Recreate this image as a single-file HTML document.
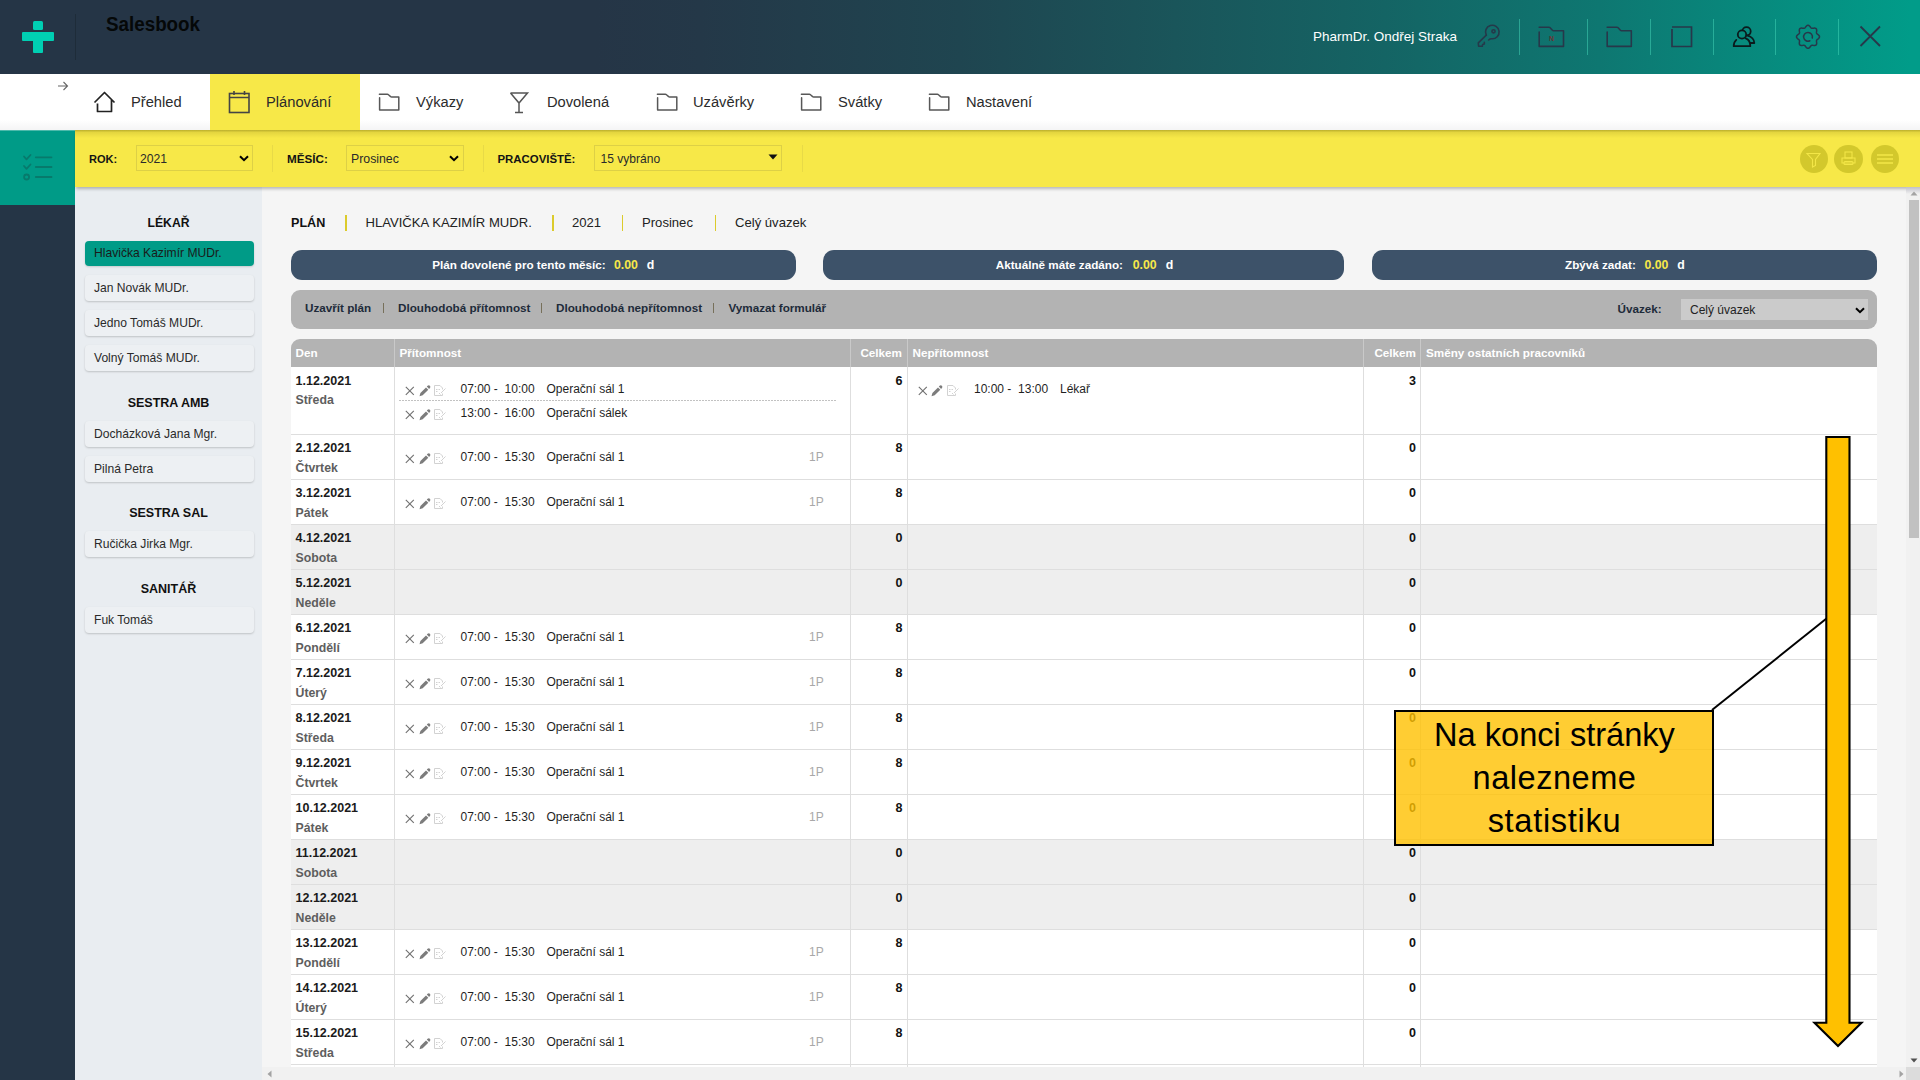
<!DOCTYPE html><html><head><meta charset="utf-8"><style>
html,body{margin:0;padding:0}
body{width:1920px;height:1080px;overflow:hidden;position:relative;font-family:"Liberation Sans", sans-serif;background:#f5f5f5}
.t{position:absolute;line-height:0;white-space:nowrap}
.r{position:absolute;box-sizing:border-box}
svg{position:absolute;overflow:visible}
</style></head><body>
<div class="r" style="left:0px;top:0px;width:1920px;height:74px;background:linear-gradient(90deg,rgb(37,53,70) 0%,rgb(37,53,70) 31%,rgb(36,56,72) 36.5%,rgb(31,69,80) 50%,rgb(26,85,90) 61.2%,rgb(20,100,100) 72.1%,rgb(14,119,113) 83.3%,rgb(1,156,137) 99.5%)"></div>
<div class="r" style="left:33px;top:20.5px;width:9.5px;height:9.7px;background:#00cfb3;border-radius:1.5px"></div>
<div class="r" style="left:22px;top:32px;width:32px;height:9.4px;background:#00cfb3;border-radius:1px"></div>
<div class="r" style="left:33px;top:40px;width:9.5px;height:13px;background:#00cfb3;border-radius:1px"></div>
<div class="r" style="left:75px;top:14px;width:1px;height:46px;background:#1e2c39"></div>
<div class="t" style="left:105.5px;top:24.07px;font-size:20px;font-weight:700;color:#050808;transform:scaleX(0.94);transform-origin:0 0">Salesbook</div>
<div class="t" style="left:1313px;top:37.02px;font-size:13.5px;font-weight:400;color:#ffffff;">PharmDr. Ondřej Straka</div>
<div class="r" style="left:1519px;top:19px;width:1px;height:36px;background:rgba(70,215,185,0.5)"></div>
<div class="r" style="left:1587px;top:19px;width:1px;height:36px;background:rgba(70,215,185,0.5)"></div>
<div class="r" style="left:1650px;top:19px;width:1px;height:36px;background:rgba(70,215,185,0.5)"></div>
<div class="r" style="left:1713px;top:19px;width:1px;height:36px;background:rgba(70,215,185,0.5)"></div>
<div class="r" style="left:1775px;top:19px;width:1px;height:36px;background:rgba(70,215,185,0.5)"></div>
<div class="r" style="left:1838px;top:19px;width:1px;height:36px;background:rgba(70,215,185,0.5)"></div>
<svg style="left:1470px;top:18px" width="40" height="36" viewBox="0 0 40 36"><g fill="none" stroke="#25394a" stroke-width="1.6" stroke-linejoin="round" stroke-linecap="round"><path d="M16.3 17.2 A6.8 6.8 0 1 1 21.8 20.8 C20.5 20.6 19.5 21.2 18.7 22"/><path d="M16.3 17.2 L8.3 24.8 L8.6 28.3 L12.3 28.3 L12.6 26.6 L14.3 26.1 L14.3 24.2"/><circle cx="23.5" cy="13.3" r="1.6"/></g></svg>
<svg style="left:1538px;top:26px" width="28" height="22" viewBox="0 0 28 22"><g fill="none" stroke="#27384a" stroke-width="1.6" stroke-linecap="round" stroke-linejoin="round"><path d="M1.2 1.3 H11 Q11.6 1.3 12.1 1.8 L14.4 4.2 Q14.9 4.7 15.5 4.7 H25.5 V20.4 H1.2 V6.1"/></g><text x="11" y="14.8" font-family="Liberation Sans" font-weight="700" font-size="7" fill="#6a3333">N</text></svg>
<svg style="left:1606px;top:26px" width="28" height="22" viewBox="0 0 28 22"><g fill="none" stroke="#27384a" stroke-width="1.6" stroke-linecap="round" stroke-linejoin="round"><path d="M1.2 1.3 H11 Q11.6 1.3 12.1 1.8 L14.4 4.2 Q14.9 4.7 15.5 4.7 H25.3 V20.4 H1.2 V6.1"/></g></svg>
<svg style="left:1671px;top:26px" width="24" height="23" viewBox="0 0 24 23"><g fill="none" stroke="#27384a" stroke-width="1.7"><path d="M1 1 H20.5 V20.5 H1 V3"/></g></svg>
<svg style="left:1726px;top:18px" width="40" height="36" viewBox="0 0 40 36"><g stroke="#0b1b1d" stroke-width="1.8" stroke-linejoin="round" stroke-linecap="round"><path d="M21.8 17.6 C25.3 18.6 28.3 21.5 28.3 25 L24.2 25" fill="none"/><circle cx="20.5" cy="13.3" r="4.2" fill="none"/><path d="M10.3 21.9 C8.6 23.4 7.7 25.6 7.7 28.2 L24.3 28.2 C24.3 24.2 22.5 21.4 19.8 20.4" fill="#078b7d"/><circle cx="16" cy="16.5" r="4.2" fill="#078b7d"/></g></svg>
<svg style="left:1795px;top:24px" width="26" height="26" viewBox="0 0 26 26"><g fill="none" stroke="#27384a" stroke-width="1.5" stroke-linejoin="round" stroke-linecap="round"><path d="M24.50 12.80 L24.44 13.25 L24.26 13.69 L23.97 14.10 L23.61 14.48 L23.20 14.83 L22.78 15.15 L22.39 15.45 L22.04 15.74 L21.78 16.04 L21.59 16.36 L21.49 16.72 L21.47 17.12 L21.51 17.57 L21.58 18.06 L21.65 18.58 L21.69 19.11 L21.68 19.64 L21.58 20.13 L21.41 20.57 L21.13 20.93 L20.77 21.21 L20.33 21.38 L19.84 21.48 L19.31 21.49 L18.78 21.45 L18.26 21.38 L17.77 21.31 L17.32 21.27 L16.92 21.29 L16.56 21.39 L16.24 21.58 L15.94 21.84 L15.65 22.19 L15.35 22.58 L15.03 23.00 L14.68 23.41 L14.30 23.77 L13.89 24.06 L13.45 24.24 L13.00 24.30 L12.55 24.24 L12.11 24.06 L11.70 23.77 L11.32 23.41 L10.97 23.00 L10.65 22.58 L10.35 22.19 L10.06 21.84 L9.76 21.58 L9.44 21.39 L9.08 21.29 L8.68 21.27 L8.23 21.31 L7.74 21.38 L7.22 21.45 L6.69 21.49 L6.16 21.48 L5.67 21.38 L5.23 21.21 L4.87 20.93 L4.59 20.57 L4.42 20.13 L4.32 19.64 L4.31 19.11 L4.35 18.58 L4.42 18.06 L4.49 17.57 L4.53 17.12 L4.51 16.72 L4.41 16.36 L4.22 16.04 L3.96 15.74 L3.61 15.45 L3.22 15.15 L2.80 14.83 L2.39 14.48 L2.03 14.10 L1.74 13.69 L1.56 13.25 L1.50 12.80 L1.56 12.35 L1.74 11.91 L2.03 11.50 L2.39 11.12 L2.80 10.77 L3.22 10.45 L3.61 10.15 L3.96 9.86 L4.22 9.56 L4.41 9.24 L4.51 8.88 L4.53 8.48 L4.49 8.03 L4.42 7.54 L4.35 7.02 L4.31 6.49 L4.32 5.96 L4.42 5.47 L4.59 5.03 L4.87 4.67 L5.23 4.39 L5.67 4.22 L6.16 4.12 L6.69 4.11 L7.22 4.15 L7.74 4.22 L8.23 4.29 L8.68 4.33 L9.08 4.31 L9.44 4.21 L9.76 4.02 L10.06 3.76 L10.35 3.41 L10.65 3.02 L10.97 2.60 L11.32 2.19 L11.70 1.83 L12.11 1.54 L12.55 1.36 L13.00 1.30 L13.45 1.36 L13.89 1.54 L14.30 1.83 L14.68 2.19 L15.03 2.60 L15.35 3.02 L15.65 3.41 L15.94 3.76 L16.24 4.02 L16.56 4.21 L16.92 4.31 L17.32 4.33 L17.77 4.29 L18.26 4.22 L18.78 4.15 L19.31 4.11 L19.84 4.12 L20.33 4.22 L20.77 4.39 L21.13 4.67 L21.41 5.03 L21.58 5.47 L21.68 5.96 L21.69 6.49 L21.65 7.02 L21.58 7.54 L21.51 8.03 L21.47 8.48 L21.49 8.88 L21.59 9.24 L21.78 9.56 L22.04 9.86 L22.39 10.15 L22.78 10.45 L23.20 10.77 L23.61 11.12 L23.97 11.50 L24.26 11.91 L24.44 12.35 Z"/><path d="M17.25 13.94 A4.4 4.4 0 1 0 14.86 16.79"/></g></svg>
<svg style="left:1859px;top:25px" width="23" height="23" viewBox="0 0 23 23"><g stroke="#27384a" stroke-width="1.8"><path d="M1.5 1.5 L21 21 M21 1.5 L1.5 21"/></g></svg>
<div class="r" style="left:0px;top:74px;width:1920px;height:56px;background:#ffffff"></div>
<div class="r" style="left:0px;top:120px;width:1920px;height:10px;background:linear-gradient(rgba(0,0,0,0),rgba(0,0,30,.045))"></div>
<div class="r" style="left:210px;top:74px;width:150px;height:56px;background:#f7e848"></div>
<svg style="left:57px;top:80px" width="12" height="12" viewBox="0 0 12 12"><g fill="none" stroke="#666" stroke-width="1.1"><path d="M1 6 H10.5 M6.5 2 L10.5 6 L6.5 10"/></g></svg>
<svg style="left:93px;top:91px" width="23" height="22" viewBox="0 0 23 22"><g fill="none" stroke="#222" stroke-width="1.7" stroke-linejoin="round"><path d="M1.5 11.5 L11.5 1.5 L21.5 11.5 M18.5 8.5 V20.5 H4.5 V12.5"/></g></svg>
<svg style="left:228px;top:90px" width="23" height="24" viewBox="0 0 23 24"><g fill="none" stroke="#444" stroke-width="1.6"><rect x="1.5" y="3.5" width="19.5" height="19"/><path d="M1.5 7.5 H21 M6 1 V5 M16.5 1 V5"/></g></svg>
<svg style="left:378px;top:93px" width="23" height="19" viewBox="0 0 23 19"><g fill="none" stroke="#575757" stroke-width="1.5" stroke-linecap="round" stroke-linejoin="round"><path d="M1.4 1.3 H9.4 Q10 1.3 10.5 1.8 L12.6 3.6 Q13 4.1 13.6 4.1 H20.8 V16.9 H1.6 V4.8"/></g></svg>
<svg style="left:656px;top:93px" width="23" height="19" viewBox="0 0 23 19"><g fill="none" stroke="#575757" stroke-width="1.5" stroke-linecap="round" stroke-linejoin="round"><path d="M1.4 1.3 H9.4 Q10 1.3 10.5 1.8 L12.6 3.6 Q13 4.1 13.6 4.1 H20.8 V16.9 H1.6 V4.8"/></g></svg>
<svg style="left:800px;top:93px" width="23" height="19" viewBox="0 0 23 19"><g fill="none" stroke="#575757" stroke-width="1.5" stroke-linecap="round" stroke-linejoin="round"><path d="M1.4 1.3 H9.4 Q10 1.3 10.5 1.8 L12.6 3.6 Q13 4.1 13.6 4.1 H20.8 V16.9 H1.6 V4.8"/></g></svg>
<svg style="left:928px;top:93px" width="23" height="19" viewBox="0 0 23 19"><g fill="none" stroke="#575757" stroke-width="1.5" stroke-linecap="round" stroke-linejoin="round"><path d="M1.4 1.3 H9.4 Q10 1.3 10.5 1.8 L12.6 3.6 Q13 4.1 13.6 4.1 H20.8 V16.9 H1.6 V4.8"/></g></svg>
<svg style="left:509px;top:92px" width="20" height="22" viewBox="0 0 20 22"><g fill="none" stroke="#555" stroke-width="1.5"><path d="M1.5 1 H18.5 L10 11 L1.5 1 M10 11 V20.5 M6 20.5 H14"/></g></svg>
<div class="t" style="left:131px;top:102.21px;font-size:14.7px;font-weight:400;color:#2b2b2b;">Přehled</div>
<div class="t" style="left:266px;top:102.21px;font-size:14.7px;font-weight:400;color:#2b2b2b;">Plánování</div>
<div class="t" style="left:416px;top:102.21px;font-size:14.7px;font-weight:400;color:#2b2b2b;">Výkazy</div>
<div class="t" style="left:547px;top:102.21px;font-size:14.7px;font-weight:400;color:#2b2b2b;">Dovolená</div>
<div class="t" style="left:693px;top:102.21px;font-size:14.7px;font-weight:400;color:#2b2b2b;">Uzávěrky</div>
<div class="t" style="left:838px;top:102.21px;font-size:14.7px;font-weight:400;color:#2b2b2b;">Svátky</div>
<div class="t" style="left:966px;top:102.21px;font-size:14.7px;font-weight:400;color:#2b2b2b;">Nastavení</div>
<div class="r" style="left:0px;top:205px;width:75px;height:875px;background:#253546"></div>
<div class="r" style="left:0px;top:130px;width:75px;height:75px;background:#009b87"></div>
<svg style="left:20px;top:150px" width="36" height="34" viewBox="0 0 36 34"><g fill="none" stroke="#077a6c" stroke-width="1.8" stroke-linecap="round" stroke-linejoin="round"><path d="M4 6.5 L6.5 9.3 L10.5 5 M4 16 L6.5 18.8 L10.5 14.5 M15.8 7.3 H31.5 M15.8 17 H31.5 M15.8 27 H31.5"/><circle cx="6.6" cy="27" r="2.5"/></g></svg>
<div class="r" style="left:75px;top:187px;width:187px;height:893px;background:#e9edf1"></div>
<div class="t" style="left:-131.5px;width:600px;text-align:center;top:222.77px;font-size:12.2px;font-weight:700;color:#111;">LÉKAŘ</div>
<div class="t" style="left:-131.5px;width:600px;text-align:center;top:402.67px;font-size:12.5px;font-weight:700;color:#111;">SESTRA AMB</div>
<div class="t" style="left:-131.5px;width:600px;text-align:center;top:512.67px;font-size:12.5px;font-weight:700;color:#111;">SESTRA SAL</div>
<div class="t" style="left:-131.5px;width:600px;text-align:center;top:588.67px;font-size:12.5px;font-weight:700;color:#111;">SANITÁŘ</div>
<div class="r" style="left:85px;top:241px;width:169px;height:25px;background:#009b87;border-radius:4px;box-shadow:0 1px 2px rgba(0,0,0,.15)"></div>
<div class="t" style="left:94px;top:253.11px;font-size:12.1px;font-weight:400;color:#1a1a1a;">Hlavička Kazimír MUDr.</div>
<div class="r" style="left:85px;top:275px;width:169px;height:26px;background:#edf0f3;border-radius:4px;box-shadow:0 1px 2px rgba(0,0,0,.18)"></div>
<div class="t" style="left:94px;top:288.01px;font-size:12.1px;font-weight:400;color:#2a2a2a;">Jan Novák MUDr.</div>
<div class="r" style="left:85px;top:310px;width:169px;height:26px;background:#edf0f3;border-radius:4px;box-shadow:0 1px 2px rgba(0,0,0,.18)"></div>
<div class="t" style="left:94px;top:323.01px;font-size:12.1px;font-weight:400;color:#2a2a2a;">Jedno Tomáš MUDr.</div>
<div class="r" style="left:85px;top:345px;width:169px;height:26px;background:#edf0f3;border-radius:4px;box-shadow:0 1px 2px rgba(0,0,0,.18)"></div>
<div class="t" style="left:94px;top:358.01px;font-size:12.1px;font-weight:400;color:#2a2a2a;">Volný Tomáš MUDr.</div>
<div class="r" style="left:85px;top:421px;width:169px;height:26px;background:#edf0f3;border-radius:4px;box-shadow:0 1px 2px rgba(0,0,0,.18)"></div>
<div class="t" style="left:94px;top:434.01px;font-size:12.1px;font-weight:400;color:#2a2a2a;">Docházková Jana Mgr.</div>
<div class="r" style="left:85px;top:456px;width:169px;height:26px;background:#edf0f3;border-radius:4px;box-shadow:0 1px 2px rgba(0,0,0,.18)"></div>
<div class="t" style="left:94px;top:469.01px;font-size:12.1px;font-weight:400;color:#2a2a2a;">Pilná Petra</div>
<div class="r" style="left:85px;top:531px;width:169px;height:26px;background:#edf0f3;border-radius:4px;box-shadow:0 1px 2px rgba(0,0,0,.18)"></div>
<div class="t" style="left:94px;top:544.01px;font-size:12.1px;font-weight:400;color:#2a2a2a;">Ručička Jirka Mgr.</div>
<div class="r" style="left:85px;top:607px;width:169px;height:26px;background:#edf0f3;border-radius:4px;box-shadow:0 1px 2px rgba(0,0,0,.18)"></div>
<div class="t" style="left:94px;top:620.01px;font-size:12.1px;font-weight:400;color:#2a2a2a;">Fuk Tomáš</div>
<div class="r" style="left:75px;top:130px;width:1845px;height:57px;background:#f7e848;box-shadow:0 3px 3px -1px rgba(0,0,0,.25)"></div>
<div class="r" style="left:75px;top:130px;width:1845px;height:8px;background:linear-gradient(rgba(90,80,0,.38),rgba(90,80,0,.12) 30%,rgba(90,80,0,0))"></div>
<div class="r" style="left:0px;top:130px;width:75px;height:1px;background:rgba(255,255,255,.3)"></div>
<div class="t" style="left:89px;top:158.99px;font-size:11px;font-weight:700;color:#141414;">ROK:</div>
<div class="r" style="left:136px;top:145px;width:117px;height:26px;border:1px solid #ddd046"></div>
<div class="t" style="left:140px;top:158.77px;font-size:12.2px;font-weight:400;color:#2a2a2a;">2021</div>
<div class="r" style="left:272px;top:145px;width:1px;height:27px;background:#e8da47"></div>
<div class="t" style="left:287px;top:158.75px;font-size:11.7px;font-weight:700;color:#141414;">MĚSÍC:</div>
<div class="r" style="left:346px;top:145px;width:118px;height:26px;border:1px solid #ddd046"></div>
<div class="t" style="left:351px;top:158.74px;font-size:12.3px;font-weight:400;color:#2a2a2a;">Prosinec</div>
<div class="r" style="left:483px;top:145px;width:1px;height:27px;background:#e8da47"></div>
<div class="t" style="left:497.5px;top:158.85px;font-size:11.4px;font-weight:700;color:#141414;">PRACOVIŠTĚ:</div>
<div class="r" style="left:594px;top:145px;width:188px;height:26px;border:1px solid #ddd046"></div>
<div class="t" style="left:600.5px;top:158.82px;font-size:12.06px;font-weight:400;color:#2a2a2a;">15 vybráno</div>
<div class="r" style="left:802px;top:145px;width:1px;height:27px;background:#e8da47"></div>
<svg style="left:239px;top:154.5px" width="10" height="7" viewBox="0 0 10 7"><path d="M1 1.2 L5 5.2 L9 1.2" fill="none" stroke="#000" stroke-width="2"/></svg>
<svg style="left:449px;top:154.5px" width="10" height="7" viewBox="0 0 10 7"><path d="M1 1.2 L5 5.2 L9 1.2" fill="none" stroke="#000" stroke-width="2"/></svg>
<svg style="left:768px;top:154px" width="10" height="6" viewBox="0 0 10 6"><path d="M0.5 0.5 H9.5 L5 5.5 Z" fill="#111"/></svg>
<div class="r" style="left:1799.5px;top:144.8px;width:28.4px;height:28.4px;border-radius:50%;background:#d3c82c"></div>
<div class="r" style="left:1834.3px;top:144.8px;width:28.4px;height:28.4px;border-radius:50%;background:#d3c82c"></div>
<div class="r" style="left:1870.6px;top:144.8px;width:28.4px;height:28.4px;border-radius:50%;background:#d3c82c"></div>
<svg style="left:1806px;top:152px" width="16" height="16" viewBox="0 0 16 16"><path d="M1 1.5 H14 L9.5 7.5 V13.5 L6.5 15 V7.5 Z" fill="none" stroke="#f3e647" stroke-width="1.1"/></svg>
<svg style="left:1840px;top:151px" width="17" height="17" viewBox="0 0 17 17"><g fill="none" stroke="#f3e647" stroke-width="1.1"><rect x="5" y="1" width="7" height="6"/><path d="M2 7 H15 V12 H2 Z"/><rect x="4" y="10.5" width="9" height="3" rx="1"/></g></svg>
<svg style="left:1876px;top:153px" width="18" height="12" viewBox="0 0 18 12"><g stroke="#f3e647" stroke-width="1.6"><path d="M1 2 H17 M1 6 H17 M1 10 H17"/></g></svg>
<div class="t" style="left:291px;top:223.33px;font-size:12.6px;font-weight:700;color:#111;">PLÁN</div>
<div class="r" style="left:345px;top:214.5px;width:1.6px;height:16px;background:#dccb2c"></div>
<div class="r" style="left:552px;top:214.5px;width:1.6px;height:16px;background:#dccb2c"></div>
<div class="r" style="left:621.5px;top:214.5px;width:1.6px;height:16px;background:#dccb2c"></div>
<div class="r" style="left:714.5px;top:214.5px;width:1.6px;height:16px;background:#dccb2c"></div>
<div class="t" style="left:365.5px;top:223.16px;font-size:13.1px;font-weight:400;color:#222;">HLAVIČKA KAZIMÍR MUDR.</div>
<div class="t" style="left:572px;top:223.16px;font-size:13.1px;font-weight:400;color:#222;">2021</div>
<div class="t" style="left:642px;top:223.16px;font-size:13.1px;font-weight:400;color:#222;">Prosinec</div>
<div class="t" style="left:735px;top:223.16px;font-size:13.1px;font-weight:400;color:#222;">Celý úvazek</div>
<div class="r" style="left:291px;top:250px;width:505px;height:30px;background:#3d5269;border-radius:11px"></div>
<div class="t" style="left:432.3px;top:265.25px;font-size:11.7px;font-weight:700;color:#ffffff;">Plán dovolené pro tento měsíc:</div>
<div class="t" style="left:614px;top:265.04px;font-size:12.3px;font-weight:700;color:#f7e848;">0.00</div>
<div class="t" style="left:646.7px;top:265.04px;font-size:12.3px;font-weight:700;color:#ffffff;">d</div>
<div class="r" style="left:823px;top:250px;width:521px;height:30px;background:#3d5269;border-radius:11px"></div>
<div class="t" style="left:995.7px;top:265.25px;font-size:11.7px;font-weight:700;color:#ffffff;">Aktuálně máte zadáno:</div>
<div class="t" style="left:1132.7px;top:265.04px;font-size:12.3px;font-weight:700;color:#f7e848;">0.00</div>
<div class="t" style="left:1165.7px;top:265.04px;font-size:12.3px;font-weight:700;color:#ffffff;">d</div>
<div class="r" style="left:1372px;top:250px;width:505px;height:30px;background:#3d5269;border-radius:11px"></div>
<div class="t" style="left:1565px;top:265.25px;font-size:11.7px;font-weight:700;color:#ffffff;">Zbývá zadat:</div>
<div class="t" style="left:1644.4px;top:265.04px;font-size:12.3px;font-weight:700;color:#f7e848;">0.00</div>
<div class="t" style="left:1677.3px;top:265.04px;font-size:12.3px;font-weight:700;color:#ffffff;">d</div>
<div class="r" style="left:291px;top:290px;width:1586px;height:39px;background:#b3b3b3;border-radius:9px"></div>
<div class="t" style="left:305px;top:307.75px;font-size:11.7px;font-weight:700;color:#1e2b3a;">Uzavřít plán</div>
<div class="t" style="left:398px;top:307.75px;font-size:11.7px;font-weight:700;color:#1e2b3a;">Dlouhodobá přítomnost</div>
<div class="t" style="left:556px;top:307.75px;font-size:11.7px;font-weight:700;color:#1e2b3a;">Dlouhodobá nepřítomnost</div>
<div class="t" style="left:728.5px;top:307.75px;font-size:11.7px;font-weight:700;color:#1e2b3a;">Vymazat formulář</div>
<div class="r" style="left:382.5px;top:302.5px;width:1px;height:10px;background:#77705a"></div>
<div class="r" style="left:541px;top:302.5px;width:1px;height:10px;background:#77705a"></div>
<div class="r" style="left:712.5px;top:302.5px;width:1px;height:10px;background:#77705a"></div>
<div class="t" style="left:1617.5px;top:308.95px;font-size:11.7px;font-weight:700;color:#1e2b3a;">Úvazek:</div>
<div class="r" style="left:1681px;top:299px;width:187px;height:21px;background:#cbcbcb"></div>
<div class="t" style="left:1690px;top:309.84px;font-size:12px;font-weight:400;color:#222;">Celý úvazek</div>
<svg style="left:1854.5px;top:307px" width="10" height="7" viewBox="0 0 10 7"><path d="M1 1.2 L5 5.2 L9 1.2" fill="none" stroke="#000" stroke-width="2"/></svg>
<div class="r" style="left:291px;top:339px;width:1586px;height:28px;background:#b3b3b3;border-radius:9px 9px 0 0"></div>
<div class="r" style="left:394px;top:339px;width:1px;height:28px;background:#c9c9c9"></div>
<div class="r" style="left:850px;top:339px;width:1px;height:28px;background:#c9c9c9"></div>
<div class="r" style="left:907px;top:339px;width:1px;height:28px;background:#c9c9c9"></div>
<div class="r" style="left:1363px;top:339px;width:1px;height:28px;background:#c9c9c9"></div>
<div class="r" style="left:1420px;top:339px;width:1px;height:28px;background:#c9c9c9"></div>
<div class="t" style="left:295.5px;top:352.95px;font-size:11.7px;font-weight:700;color:#ffffff;">Den</div>
<div class="t" style="left:399.5px;top:352.95px;font-size:11.7px;font-weight:700;color:#ffffff;">Přítomnost</div>
<div class="t" style="right:1018px;top:352.95px;font-size:11.7px;font-weight:700;color:#ffffff;text-align:right;">Celkem</div>
<div class="t" style="left:912.5px;top:352.95px;font-size:11.7px;font-weight:700;color:#ffffff;">Nepřítomnost</div>
<div class="t" style="right:504px;top:352.95px;font-size:11.7px;font-weight:700;color:#ffffff;text-align:right;">Celkem</div>
<div class="t" style="left:1426px;top:352.95px;font-size:11.7px;font-weight:700;color:#ffffff;">Směny ostatních pracovníků</div>
<div class="r" style="left:291px;top:367px;width:1586px;height:68px;background:#ffffff;border-bottom:1px solid #dedede"></div>
<div class="r" style="left:394px;top:367px;width:1px;height:68px;background:#dedede"></div>
<div class="r" style="left:850px;top:367px;width:1px;height:68px;background:#dedede"></div>
<div class="r" style="left:907px;top:367px;width:1px;height:68px;background:#dedede"></div>
<div class="r" style="left:1363px;top:367px;width:1px;height:68px;background:#dedede"></div>
<div class="r" style="left:1420px;top:367px;width:1px;height:68px;background:#dedede"></div>
<div class="r" style="left:291px;top:435px;width:1586px;height:45px;background:#ffffff;border-bottom:1px solid #dedede"></div>
<div class="r" style="left:394px;top:435px;width:1px;height:45px;background:#dedede"></div>
<div class="r" style="left:850px;top:435px;width:1px;height:45px;background:#dedede"></div>
<div class="r" style="left:907px;top:435px;width:1px;height:45px;background:#dedede"></div>
<div class="r" style="left:1363px;top:435px;width:1px;height:45px;background:#dedede"></div>
<div class="r" style="left:1420px;top:435px;width:1px;height:45px;background:#dedede"></div>
<div class="r" style="left:291px;top:480px;width:1586px;height:45px;background:#ffffff;border-bottom:1px solid #dedede"></div>
<div class="r" style="left:394px;top:480px;width:1px;height:45px;background:#dedede"></div>
<div class="r" style="left:850px;top:480px;width:1px;height:45px;background:#dedede"></div>
<div class="r" style="left:907px;top:480px;width:1px;height:45px;background:#dedede"></div>
<div class="r" style="left:1363px;top:480px;width:1px;height:45px;background:#dedede"></div>
<div class="r" style="left:1420px;top:480px;width:1px;height:45px;background:#dedede"></div>
<div class="r" style="left:291px;top:525px;width:1586px;height:45px;background:#eeeeee;border-bottom:1px solid #dedede"></div>
<div class="r" style="left:394px;top:525px;width:1px;height:45px;background:#dedede"></div>
<div class="r" style="left:850px;top:525px;width:1px;height:45px;background:#dedede"></div>
<div class="r" style="left:907px;top:525px;width:1px;height:45px;background:#dedede"></div>
<div class="r" style="left:1363px;top:525px;width:1px;height:45px;background:#dedede"></div>
<div class="r" style="left:1420px;top:525px;width:1px;height:45px;background:#dedede"></div>
<div class="r" style="left:291px;top:570px;width:1586px;height:45px;background:#eeeeee;border-bottom:1px solid #dedede"></div>
<div class="r" style="left:394px;top:570px;width:1px;height:45px;background:#dedede"></div>
<div class="r" style="left:850px;top:570px;width:1px;height:45px;background:#dedede"></div>
<div class="r" style="left:907px;top:570px;width:1px;height:45px;background:#dedede"></div>
<div class="r" style="left:1363px;top:570px;width:1px;height:45px;background:#dedede"></div>
<div class="r" style="left:1420px;top:570px;width:1px;height:45px;background:#dedede"></div>
<div class="r" style="left:291px;top:615px;width:1586px;height:45px;background:#ffffff;border-bottom:1px solid #dedede"></div>
<div class="r" style="left:394px;top:615px;width:1px;height:45px;background:#dedede"></div>
<div class="r" style="left:850px;top:615px;width:1px;height:45px;background:#dedede"></div>
<div class="r" style="left:907px;top:615px;width:1px;height:45px;background:#dedede"></div>
<div class="r" style="left:1363px;top:615px;width:1px;height:45px;background:#dedede"></div>
<div class="r" style="left:1420px;top:615px;width:1px;height:45px;background:#dedede"></div>
<div class="r" style="left:291px;top:660px;width:1586px;height:45px;background:#ffffff;border-bottom:1px solid #dedede"></div>
<div class="r" style="left:394px;top:660px;width:1px;height:45px;background:#dedede"></div>
<div class="r" style="left:850px;top:660px;width:1px;height:45px;background:#dedede"></div>
<div class="r" style="left:907px;top:660px;width:1px;height:45px;background:#dedede"></div>
<div class="r" style="left:1363px;top:660px;width:1px;height:45px;background:#dedede"></div>
<div class="r" style="left:1420px;top:660px;width:1px;height:45px;background:#dedede"></div>
<div class="r" style="left:291px;top:705px;width:1586px;height:45px;background:#ffffff;border-bottom:1px solid #dedede"></div>
<div class="r" style="left:394px;top:705px;width:1px;height:45px;background:#dedede"></div>
<div class="r" style="left:850px;top:705px;width:1px;height:45px;background:#dedede"></div>
<div class="r" style="left:907px;top:705px;width:1px;height:45px;background:#dedede"></div>
<div class="r" style="left:1363px;top:705px;width:1px;height:45px;background:#dedede"></div>
<div class="r" style="left:1420px;top:705px;width:1px;height:45px;background:#dedede"></div>
<div class="r" style="left:291px;top:750px;width:1586px;height:45px;background:#ffffff;border-bottom:1px solid #dedede"></div>
<div class="r" style="left:394px;top:750px;width:1px;height:45px;background:#dedede"></div>
<div class="r" style="left:850px;top:750px;width:1px;height:45px;background:#dedede"></div>
<div class="r" style="left:907px;top:750px;width:1px;height:45px;background:#dedede"></div>
<div class="r" style="left:1363px;top:750px;width:1px;height:45px;background:#dedede"></div>
<div class="r" style="left:1420px;top:750px;width:1px;height:45px;background:#dedede"></div>
<div class="r" style="left:291px;top:795px;width:1586px;height:45px;background:#ffffff;border-bottom:1px solid #dedede"></div>
<div class="r" style="left:394px;top:795px;width:1px;height:45px;background:#dedede"></div>
<div class="r" style="left:850px;top:795px;width:1px;height:45px;background:#dedede"></div>
<div class="r" style="left:907px;top:795px;width:1px;height:45px;background:#dedede"></div>
<div class="r" style="left:1363px;top:795px;width:1px;height:45px;background:#dedede"></div>
<div class="r" style="left:1420px;top:795px;width:1px;height:45px;background:#dedede"></div>
<div class="r" style="left:291px;top:840px;width:1586px;height:45px;background:#eeeeee;border-bottom:1px solid #dedede"></div>
<div class="r" style="left:394px;top:840px;width:1px;height:45px;background:#dedede"></div>
<div class="r" style="left:850px;top:840px;width:1px;height:45px;background:#dedede"></div>
<div class="r" style="left:907px;top:840px;width:1px;height:45px;background:#dedede"></div>
<div class="r" style="left:1363px;top:840px;width:1px;height:45px;background:#dedede"></div>
<div class="r" style="left:1420px;top:840px;width:1px;height:45px;background:#dedede"></div>
<div class="r" style="left:291px;top:885px;width:1586px;height:45px;background:#eeeeee;border-bottom:1px solid #dedede"></div>
<div class="r" style="left:394px;top:885px;width:1px;height:45px;background:#dedede"></div>
<div class="r" style="left:850px;top:885px;width:1px;height:45px;background:#dedede"></div>
<div class="r" style="left:907px;top:885px;width:1px;height:45px;background:#dedede"></div>
<div class="r" style="left:1363px;top:885px;width:1px;height:45px;background:#dedede"></div>
<div class="r" style="left:1420px;top:885px;width:1px;height:45px;background:#dedede"></div>
<div class="r" style="left:291px;top:930px;width:1586px;height:45px;background:#ffffff;border-bottom:1px solid #dedede"></div>
<div class="r" style="left:394px;top:930px;width:1px;height:45px;background:#dedede"></div>
<div class="r" style="left:850px;top:930px;width:1px;height:45px;background:#dedede"></div>
<div class="r" style="left:907px;top:930px;width:1px;height:45px;background:#dedede"></div>
<div class="r" style="left:1363px;top:930px;width:1px;height:45px;background:#dedede"></div>
<div class="r" style="left:1420px;top:930px;width:1px;height:45px;background:#dedede"></div>
<div class="r" style="left:291px;top:975px;width:1586px;height:45px;background:#ffffff;border-bottom:1px solid #dedede"></div>
<div class="r" style="left:394px;top:975px;width:1px;height:45px;background:#dedede"></div>
<div class="r" style="left:850px;top:975px;width:1px;height:45px;background:#dedede"></div>
<div class="r" style="left:907px;top:975px;width:1px;height:45px;background:#dedede"></div>
<div class="r" style="left:1363px;top:975px;width:1px;height:45px;background:#dedede"></div>
<div class="r" style="left:1420px;top:975px;width:1px;height:45px;background:#dedede"></div>
<div class="r" style="left:291px;top:1020px;width:1586px;height:45px;background:#ffffff;border-bottom:1px solid #dedede"></div>
<div class="r" style="left:394px;top:1020px;width:1px;height:45px;background:#dedede"></div>
<div class="r" style="left:850px;top:1020px;width:1px;height:45px;background:#dedede"></div>
<div class="r" style="left:907px;top:1020px;width:1px;height:45px;background:#dedede"></div>
<div class="r" style="left:1363px;top:1020px;width:1px;height:45px;background:#dedede"></div>
<div class="r" style="left:1420px;top:1020px;width:1px;height:45px;background:#dedede"></div>
<div class="t" style="left:295.5px;top:381.27px;font-size:12.5px;font-weight:700;color:#1b1b1b;">1.12.2021</div>
<div class="t" style="left:295.5px;top:399.54px;font-size:12.3px;font-weight:700;color:#5e5e5e;">Středa</div>
<svg style="left:405.0px;top:385.7px" width="10" height="10" viewBox="0 0 10 10"><path d="M0.8 0.8 L8.8 8.8 M8.8 0.8 L0.8 8.8" stroke="#6f6f6f" stroke-width="1.1"/></svg>
<svg style="left:418.5px;top:384.7px" width="12" height="12" viewBox="0 0 12 12"><path d="M0.5 11.3 L1.4 8 L7 2.4 L9.3 4.7 L3.7 10.3 Z M7.8 1.6 L8.6 0.8 A1.5 1.5 0 0 1 10.9 3.1 L10.1 3.9 Z" fill="#7c7c7c"/></svg>
<svg style="left:434.0px;top:384.7px" width="13" height="12" viewBox="0 0 13 12"><g fill="none" stroke="#d2d2d2" stroke-width="1"><path d="M8.5 4.5 V3 L6 0.5 H0.5 V10.5 H8.5 V8.5"/><path d="M2 4.5 H3.5 M4.5 4.5 H6 M2 6.5 H3.5 M5 8 L6.5 9.5 M7 8 L11.5 3.5"/></g></svg>
<div class="t" style="left:460.5px;top:388.64px;font-size:12px;font-weight:400;color:#1f1f1f;">07:00 -&nbsp; 10:00</div>
<div class="t" style="left:546.5px;top:388.64px;font-size:12px;font-weight:400;color:#1f1f1f;">Operační sál 1</div>
<div class="r" style="left:399px;top:400px;width:437px;height:1px;background:repeating-linear-gradient(90deg,#c2c2c2 0 2px,rgba(0,0,0,0) 2px 3px)"></div>
<svg style="left:405.0px;top:410.2px" width="10" height="10" viewBox="0 0 10 10"><path d="M0.8 0.8 L8.8 8.8 M8.8 0.8 L0.8 8.8" stroke="#6f6f6f" stroke-width="1.1"/></svg>
<svg style="left:418.5px;top:409.2px" width="12" height="12" viewBox="0 0 12 12"><path d="M0.5 11.3 L1.4 8 L7 2.4 L9.3 4.7 L3.7 10.3 Z M7.8 1.6 L8.6 0.8 A1.5 1.5 0 0 1 10.9 3.1 L10.1 3.9 Z" fill="#7c7c7c"/></svg>
<svg style="left:434.0px;top:409.2px" width="13" height="12" viewBox="0 0 13 12"><g fill="none" stroke="#d2d2d2" stroke-width="1"><path d="M8.5 4.5 V3 L6 0.5 H0.5 V10.5 H8.5 V8.5"/><path d="M2 4.5 H3.5 M4.5 4.5 H6 M2 6.5 H3.5 M5 8 L6.5 9.5 M7 8 L11.5 3.5"/></g></svg>
<div class="t" style="left:460.5px;top:412.64px;font-size:12px;font-weight:400;color:#1f1f1f;">13:00 -&nbsp; 16:00</div>
<div class="t" style="left:546.5px;top:412.64px;font-size:12px;font-weight:400;color:#1f1f1f;">Operační sálek</div>
<div class="t" style="right:1017.5px;top:381.17px;font-size:12.5px;font-weight:700;color:#111;text-align:right;">6</div>
<svg style="left:917.5px;top:385.7px" width="10" height="10" viewBox="0 0 10 10"><path d="M0.8 0.8 L8.8 8.8 M8.8 0.8 L0.8 8.8" stroke="#6f6f6f" stroke-width="1.1"/></svg>
<svg style="left:931px;top:384.7px" width="12" height="12" viewBox="0 0 12 12"><path d="M0.5 11.3 L1.4 8 L7 2.4 L9.3 4.7 L3.7 10.3 Z M7.8 1.6 L8.6 0.8 A1.5 1.5 0 0 1 10.9 3.1 L10.1 3.9 Z" fill="#7c7c7c"/></svg>
<svg style="left:946.5px;top:384.7px" width="13" height="12" viewBox="0 0 13 12"><g fill="none" stroke="#d2d2d2" stroke-width="1"><path d="M8.5 4.5 V3 L6 0.5 H0.5 V10.5 H8.5 V8.5"/><path d="M2 4.5 H3.5 M4.5 4.5 H6 M2 6.5 H3.5 M5 8 L6.5 9.5 M7 8 L11.5 3.5"/></g></svg>
<div class="t" style="left:974px;top:389.14px;font-size:12px;font-weight:400;color:#1f1f1f;">10:00 -&nbsp; 13:00</div>
<div class="t" style="left:1060px;top:389.14px;font-size:12px;font-weight:400;color:#1f1f1f;">Lékař</div>
<div class="t" style="right:504px;top:381.17px;font-size:12.5px;font-weight:700;color:#111;text-align:right;">3</div>
<div class="t" style="left:295.5px;top:448.47px;font-size:12.5px;font-weight:700;color:#1b1b1b;">2.12.2021</div>
<div class="t" style="left:295.5px;top:467.54px;font-size:12.3px;font-weight:700;color:#5e5e5e;">Čtvrtek</div>
<svg style="left:405.0px;top:454.0px" width="10" height="10" viewBox="0 0 10 10"><path d="M0.8 0.8 L8.8 8.8 M8.8 0.8 L0.8 8.8" stroke="#6f6f6f" stroke-width="1.1"/></svg>
<svg style="left:418.5px;top:453.0px" width="12" height="12" viewBox="0 0 12 12"><path d="M0.5 11.3 L1.4 8 L7 2.4 L9.3 4.7 L3.7 10.3 Z M7.8 1.6 L8.6 0.8 A1.5 1.5 0 0 1 10.9 3.1 L10.1 3.9 Z" fill="#7c7c7c"/></svg>
<svg style="left:434.0px;top:453.0px" width="13" height="12" viewBox="0 0 13 12"><g fill="none" stroke="#d2d2d2" stroke-width="1"><path d="M8.5 4.5 V3 L6 0.5 H0.5 V10.5 H8.5 V8.5"/><path d="M2 4.5 H3.5 M4.5 4.5 H6 M2 6.5 H3.5 M5 8 L6.5 9.5 M7 8 L11.5 3.5"/></g></svg>
<div class="t" style="left:460.5px;top:456.84px;font-size:12px;font-weight:400;color:#1f1f1f;">07:00 -&nbsp; 15:30</div>
<div class="t" style="left:546.5px;top:456.84px;font-size:12px;font-weight:400;color:#1f1f1f;">Operační sál 1</div>
<div class="t" style="left:809px;top:456.84px;font-size:12px;font-weight:400;color:#a8a8a8;">1P</div>
<div class="t" style="right:1017.5px;top:448.27px;font-size:12.5px;font-weight:700;color:#111;text-align:right;">8</div>
<div class="t" style="right:504px;top:448.27px;font-size:12.5px;font-weight:700;color:#111;text-align:right;">0</div>
<div class="t" style="left:295.5px;top:493.47px;font-size:12.5px;font-weight:700;color:#1b1b1b;">3.12.2021</div>
<div class="t" style="left:295.5px;top:512.54px;font-size:12.3px;font-weight:700;color:#5e5e5e;">Pátek</div>
<svg style="left:405.0px;top:499.0px" width="10" height="10" viewBox="0 0 10 10"><path d="M0.8 0.8 L8.8 8.8 M8.8 0.8 L0.8 8.8" stroke="#6f6f6f" stroke-width="1.1"/></svg>
<svg style="left:418.5px;top:498.0px" width="12" height="12" viewBox="0 0 12 12"><path d="M0.5 11.3 L1.4 8 L7 2.4 L9.3 4.7 L3.7 10.3 Z M7.8 1.6 L8.6 0.8 A1.5 1.5 0 0 1 10.9 3.1 L10.1 3.9 Z" fill="#7c7c7c"/></svg>
<svg style="left:434.0px;top:498.0px" width="13" height="12" viewBox="0 0 13 12"><g fill="none" stroke="#d2d2d2" stroke-width="1"><path d="M8.5 4.5 V3 L6 0.5 H0.5 V10.5 H8.5 V8.5"/><path d="M2 4.5 H3.5 M4.5 4.5 H6 M2 6.5 H3.5 M5 8 L6.5 9.5 M7 8 L11.5 3.5"/></g></svg>
<div class="t" style="left:460.5px;top:501.84px;font-size:12px;font-weight:400;color:#1f1f1f;">07:00 -&nbsp; 15:30</div>
<div class="t" style="left:546.5px;top:501.84px;font-size:12px;font-weight:400;color:#1f1f1f;">Operační sál 1</div>
<div class="t" style="left:809px;top:501.84px;font-size:12px;font-weight:400;color:#a8a8a8;">1P</div>
<div class="t" style="right:1017.5px;top:493.27px;font-size:12.5px;font-weight:700;color:#111;text-align:right;">8</div>
<div class="t" style="right:504px;top:493.27px;font-size:12.5px;font-weight:700;color:#111;text-align:right;">0</div>
<div class="t" style="left:295.5px;top:538.47px;font-size:12.5px;font-weight:700;color:#1b1b1b;">4.12.2021</div>
<div class="t" style="left:295.5px;top:557.54px;font-size:12.3px;font-weight:700;color:#5e5e5e;">Sobota</div>
<div class="t" style="right:1017.5px;top:538.27px;font-size:12.5px;font-weight:700;color:#111;text-align:right;">0</div>
<div class="t" style="right:504px;top:538.27px;font-size:12.5px;font-weight:700;color:#111;text-align:right;">0</div>
<div class="t" style="left:295.5px;top:583.47px;font-size:12.5px;font-weight:700;color:#1b1b1b;">5.12.2021</div>
<div class="t" style="left:295.5px;top:602.54px;font-size:12.3px;font-weight:700;color:#5e5e5e;">Neděle</div>
<div class="t" style="right:1017.5px;top:583.27px;font-size:12.5px;font-weight:700;color:#111;text-align:right;">0</div>
<div class="t" style="right:504px;top:583.27px;font-size:12.5px;font-weight:700;color:#111;text-align:right;">0</div>
<div class="t" style="left:295.5px;top:628.47px;font-size:12.5px;font-weight:700;color:#1b1b1b;">6.12.2021</div>
<div class="t" style="left:295.5px;top:647.54px;font-size:12.3px;font-weight:700;color:#5e5e5e;">Pondělí</div>
<svg style="left:405.0px;top:634.0px" width="10" height="10" viewBox="0 0 10 10"><path d="M0.8 0.8 L8.8 8.8 M8.8 0.8 L0.8 8.8" stroke="#6f6f6f" stroke-width="1.1"/></svg>
<svg style="left:418.5px;top:633.0px" width="12" height="12" viewBox="0 0 12 12"><path d="M0.5 11.3 L1.4 8 L7 2.4 L9.3 4.7 L3.7 10.3 Z M7.8 1.6 L8.6 0.8 A1.5 1.5 0 0 1 10.9 3.1 L10.1 3.9 Z" fill="#7c7c7c"/></svg>
<svg style="left:434.0px;top:633.0px" width="13" height="12" viewBox="0 0 13 12"><g fill="none" stroke="#d2d2d2" stroke-width="1"><path d="M8.5 4.5 V3 L6 0.5 H0.5 V10.5 H8.5 V8.5"/><path d="M2 4.5 H3.5 M4.5 4.5 H6 M2 6.5 H3.5 M5 8 L6.5 9.5 M7 8 L11.5 3.5"/></g></svg>
<div class="t" style="left:460.5px;top:636.84px;font-size:12px;font-weight:400;color:#1f1f1f;">07:00 -&nbsp; 15:30</div>
<div class="t" style="left:546.5px;top:636.84px;font-size:12px;font-weight:400;color:#1f1f1f;">Operační sál 1</div>
<div class="t" style="left:809px;top:636.84px;font-size:12px;font-weight:400;color:#a8a8a8;">1P</div>
<div class="t" style="right:1017.5px;top:628.27px;font-size:12.5px;font-weight:700;color:#111;text-align:right;">8</div>
<div class="t" style="right:504px;top:628.27px;font-size:12.5px;font-weight:700;color:#111;text-align:right;">0</div>
<div class="t" style="left:295.5px;top:673.47px;font-size:12.5px;font-weight:700;color:#1b1b1b;">7.12.2021</div>
<div class="t" style="left:295.5px;top:692.54px;font-size:12.3px;font-weight:700;color:#5e5e5e;">Úterý</div>
<svg style="left:405.0px;top:679.0px" width="10" height="10" viewBox="0 0 10 10"><path d="M0.8 0.8 L8.8 8.8 M8.8 0.8 L0.8 8.8" stroke="#6f6f6f" stroke-width="1.1"/></svg>
<svg style="left:418.5px;top:678.0px" width="12" height="12" viewBox="0 0 12 12"><path d="M0.5 11.3 L1.4 8 L7 2.4 L9.3 4.7 L3.7 10.3 Z M7.8 1.6 L8.6 0.8 A1.5 1.5 0 0 1 10.9 3.1 L10.1 3.9 Z" fill="#7c7c7c"/></svg>
<svg style="left:434.0px;top:678.0px" width="13" height="12" viewBox="0 0 13 12"><g fill="none" stroke="#d2d2d2" stroke-width="1"><path d="M8.5 4.5 V3 L6 0.5 H0.5 V10.5 H8.5 V8.5"/><path d="M2 4.5 H3.5 M4.5 4.5 H6 M2 6.5 H3.5 M5 8 L6.5 9.5 M7 8 L11.5 3.5"/></g></svg>
<div class="t" style="left:460.5px;top:681.84px;font-size:12px;font-weight:400;color:#1f1f1f;">07:00 -&nbsp; 15:30</div>
<div class="t" style="left:546.5px;top:681.84px;font-size:12px;font-weight:400;color:#1f1f1f;">Operační sál 1</div>
<div class="t" style="left:809px;top:681.84px;font-size:12px;font-weight:400;color:#a8a8a8;">1P</div>
<div class="t" style="right:1017.5px;top:673.27px;font-size:12.5px;font-weight:700;color:#111;text-align:right;">8</div>
<div class="t" style="right:504px;top:673.27px;font-size:12.5px;font-weight:700;color:#111;text-align:right;">0</div>
<div class="t" style="left:295.5px;top:718.47px;font-size:12.5px;font-weight:700;color:#1b1b1b;">8.12.2021</div>
<div class="t" style="left:295.5px;top:737.54px;font-size:12.3px;font-weight:700;color:#5e5e5e;">Středa</div>
<svg style="left:405.0px;top:724.0px" width="10" height="10" viewBox="0 0 10 10"><path d="M0.8 0.8 L8.8 8.8 M8.8 0.8 L0.8 8.8" stroke="#6f6f6f" stroke-width="1.1"/></svg>
<svg style="left:418.5px;top:723.0px" width="12" height="12" viewBox="0 0 12 12"><path d="M0.5 11.3 L1.4 8 L7 2.4 L9.3 4.7 L3.7 10.3 Z M7.8 1.6 L8.6 0.8 A1.5 1.5 0 0 1 10.9 3.1 L10.1 3.9 Z" fill="#7c7c7c"/></svg>
<svg style="left:434.0px;top:723.0px" width="13" height="12" viewBox="0 0 13 12"><g fill="none" stroke="#d2d2d2" stroke-width="1"><path d="M8.5 4.5 V3 L6 0.5 H0.5 V10.5 H8.5 V8.5"/><path d="M2 4.5 H3.5 M4.5 4.5 H6 M2 6.5 H3.5 M5 8 L6.5 9.5 M7 8 L11.5 3.5"/></g></svg>
<div class="t" style="left:460.5px;top:726.84px;font-size:12px;font-weight:400;color:#1f1f1f;">07:00 -&nbsp; 15:30</div>
<div class="t" style="left:546.5px;top:726.84px;font-size:12px;font-weight:400;color:#1f1f1f;">Operační sál 1</div>
<div class="t" style="left:809px;top:726.84px;font-size:12px;font-weight:400;color:#a8a8a8;">1P</div>
<div class="t" style="right:1017.5px;top:718.27px;font-size:12.5px;font-weight:700;color:#111;text-align:right;">8</div>
<div class="t" style="right:504px;top:718.27px;font-size:12.5px;font-weight:700;color:#111;text-align:right;">0</div>
<div class="t" style="left:295.5px;top:763.47px;font-size:12.5px;font-weight:700;color:#1b1b1b;">9.12.2021</div>
<div class="t" style="left:295.5px;top:782.54px;font-size:12.3px;font-weight:700;color:#5e5e5e;">Čtvrtek</div>
<svg style="left:405.0px;top:769.0px" width="10" height="10" viewBox="0 0 10 10"><path d="M0.8 0.8 L8.8 8.8 M8.8 0.8 L0.8 8.8" stroke="#6f6f6f" stroke-width="1.1"/></svg>
<svg style="left:418.5px;top:768.0px" width="12" height="12" viewBox="0 0 12 12"><path d="M0.5 11.3 L1.4 8 L7 2.4 L9.3 4.7 L3.7 10.3 Z M7.8 1.6 L8.6 0.8 A1.5 1.5 0 0 1 10.9 3.1 L10.1 3.9 Z" fill="#7c7c7c"/></svg>
<svg style="left:434.0px;top:768.0px" width="13" height="12" viewBox="0 0 13 12"><g fill="none" stroke="#d2d2d2" stroke-width="1"><path d="M8.5 4.5 V3 L6 0.5 H0.5 V10.5 H8.5 V8.5"/><path d="M2 4.5 H3.5 M4.5 4.5 H6 M2 6.5 H3.5 M5 8 L6.5 9.5 M7 8 L11.5 3.5"/></g></svg>
<div class="t" style="left:460.5px;top:771.84px;font-size:12px;font-weight:400;color:#1f1f1f;">07:00 -&nbsp; 15:30</div>
<div class="t" style="left:546.5px;top:771.84px;font-size:12px;font-weight:400;color:#1f1f1f;">Operační sál 1</div>
<div class="t" style="left:809px;top:771.84px;font-size:12px;font-weight:400;color:#a8a8a8;">1P</div>
<div class="t" style="right:1017.5px;top:763.27px;font-size:12.5px;font-weight:700;color:#111;text-align:right;">8</div>
<div class="t" style="right:504px;top:763.27px;font-size:12.5px;font-weight:700;color:#111;text-align:right;">0</div>
<div class="t" style="left:295.5px;top:808.47px;font-size:12.5px;font-weight:700;color:#1b1b1b;">10.12.2021</div>
<div class="t" style="left:295.5px;top:827.54px;font-size:12.3px;font-weight:700;color:#5e5e5e;">Pátek</div>
<svg style="left:405.0px;top:814.0px" width="10" height="10" viewBox="0 0 10 10"><path d="M0.8 0.8 L8.8 8.8 M8.8 0.8 L0.8 8.8" stroke="#6f6f6f" stroke-width="1.1"/></svg>
<svg style="left:418.5px;top:813.0px" width="12" height="12" viewBox="0 0 12 12"><path d="M0.5 11.3 L1.4 8 L7 2.4 L9.3 4.7 L3.7 10.3 Z M7.8 1.6 L8.6 0.8 A1.5 1.5 0 0 1 10.9 3.1 L10.1 3.9 Z" fill="#7c7c7c"/></svg>
<svg style="left:434.0px;top:813.0px" width="13" height="12" viewBox="0 0 13 12"><g fill="none" stroke="#d2d2d2" stroke-width="1"><path d="M8.5 4.5 V3 L6 0.5 H0.5 V10.5 H8.5 V8.5"/><path d="M2 4.5 H3.5 M4.5 4.5 H6 M2 6.5 H3.5 M5 8 L6.5 9.5 M7 8 L11.5 3.5"/></g></svg>
<div class="t" style="left:460.5px;top:816.84px;font-size:12px;font-weight:400;color:#1f1f1f;">07:00 -&nbsp; 15:30</div>
<div class="t" style="left:546.5px;top:816.84px;font-size:12px;font-weight:400;color:#1f1f1f;">Operační sál 1</div>
<div class="t" style="left:809px;top:816.84px;font-size:12px;font-weight:400;color:#a8a8a8;">1P</div>
<div class="t" style="right:1017.5px;top:808.27px;font-size:12.5px;font-weight:700;color:#111;text-align:right;">8</div>
<div class="t" style="right:504px;top:808.27px;font-size:12.5px;font-weight:700;color:#111;text-align:right;">0</div>
<div class="t" style="left:295.5px;top:853.47px;font-size:12.5px;font-weight:700;color:#1b1b1b;">11.12.2021</div>
<div class="t" style="left:295.5px;top:872.54px;font-size:12.3px;font-weight:700;color:#5e5e5e;">Sobota</div>
<div class="t" style="right:1017.5px;top:853.27px;font-size:12.5px;font-weight:700;color:#111;text-align:right;">0</div>
<div class="t" style="right:504px;top:853.27px;font-size:12.5px;font-weight:700;color:#111;text-align:right;">0</div>
<div class="t" style="left:295.5px;top:898.47px;font-size:12.5px;font-weight:700;color:#1b1b1b;">12.12.2021</div>
<div class="t" style="left:295.5px;top:917.54px;font-size:12.3px;font-weight:700;color:#5e5e5e;">Neděle</div>
<div class="t" style="right:1017.5px;top:898.27px;font-size:12.5px;font-weight:700;color:#111;text-align:right;">0</div>
<div class="t" style="right:504px;top:898.27px;font-size:12.5px;font-weight:700;color:#111;text-align:right;">0</div>
<div class="t" style="left:295.5px;top:943.47px;font-size:12.5px;font-weight:700;color:#1b1b1b;">13.12.2021</div>
<div class="t" style="left:295.5px;top:962.54px;font-size:12.3px;font-weight:700;color:#5e5e5e;">Pondělí</div>
<svg style="left:405.0px;top:949.0px" width="10" height="10" viewBox="0 0 10 10"><path d="M0.8 0.8 L8.8 8.8 M8.8 0.8 L0.8 8.8" stroke="#6f6f6f" stroke-width="1.1"/></svg>
<svg style="left:418.5px;top:948.0px" width="12" height="12" viewBox="0 0 12 12"><path d="M0.5 11.3 L1.4 8 L7 2.4 L9.3 4.7 L3.7 10.3 Z M7.8 1.6 L8.6 0.8 A1.5 1.5 0 0 1 10.9 3.1 L10.1 3.9 Z" fill="#7c7c7c"/></svg>
<svg style="left:434.0px;top:948.0px" width="13" height="12" viewBox="0 0 13 12"><g fill="none" stroke="#d2d2d2" stroke-width="1"><path d="M8.5 4.5 V3 L6 0.5 H0.5 V10.5 H8.5 V8.5"/><path d="M2 4.5 H3.5 M4.5 4.5 H6 M2 6.5 H3.5 M5 8 L6.5 9.5 M7 8 L11.5 3.5"/></g></svg>
<div class="t" style="left:460.5px;top:951.84px;font-size:12px;font-weight:400;color:#1f1f1f;">07:00 -&nbsp; 15:30</div>
<div class="t" style="left:546.5px;top:951.84px;font-size:12px;font-weight:400;color:#1f1f1f;">Operační sál 1</div>
<div class="t" style="left:809px;top:951.84px;font-size:12px;font-weight:400;color:#a8a8a8;">1P</div>
<div class="t" style="right:1017.5px;top:943.27px;font-size:12.5px;font-weight:700;color:#111;text-align:right;">8</div>
<div class="t" style="right:504px;top:943.27px;font-size:12.5px;font-weight:700;color:#111;text-align:right;">0</div>
<div class="t" style="left:295.5px;top:988.47px;font-size:12.5px;font-weight:700;color:#1b1b1b;">14.12.2021</div>
<div class="t" style="left:295.5px;top:1007.54px;font-size:12.3px;font-weight:700;color:#5e5e5e;">Úterý</div>
<svg style="left:405.0px;top:994.0px" width="10" height="10" viewBox="0 0 10 10"><path d="M0.8 0.8 L8.8 8.8 M8.8 0.8 L0.8 8.8" stroke="#6f6f6f" stroke-width="1.1"/></svg>
<svg style="left:418.5px;top:993.0px" width="12" height="12" viewBox="0 0 12 12"><path d="M0.5 11.3 L1.4 8 L7 2.4 L9.3 4.7 L3.7 10.3 Z M7.8 1.6 L8.6 0.8 A1.5 1.5 0 0 1 10.9 3.1 L10.1 3.9 Z" fill="#7c7c7c"/></svg>
<svg style="left:434.0px;top:993.0px" width="13" height="12" viewBox="0 0 13 12"><g fill="none" stroke="#d2d2d2" stroke-width="1"><path d="M8.5 4.5 V3 L6 0.5 H0.5 V10.5 H8.5 V8.5"/><path d="M2 4.5 H3.5 M4.5 4.5 H6 M2 6.5 H3.5 M5 8 L6.5 9.5 M7 8 L11.5 3.5"/></g></svg>
<div class="t" style="left:460.5px;top:996.84px;font-size:12px;font-weight:400;color:#1f1f1f;">07:00 -&nbsp; 15:30</div>
<div class="t" style="left:546.5px;top:996.84px;font-size:12px;font-weight:400;color:#1f1f1f;">Operační sál 1</div>
<div class="t" style="left:809px;top:996.84px;font-size:12px;font-weight:400;color:#a8a8a8;">1P</div>
<div class="t" style="right:1017.5px;top:988.27px;font-size:12.5px;font-weight:700;color:#111;text-align:right;">8</div>
<div class="t" style="right:504px;top:988.27px;font-size:12.5px;font-weight:700;color:#111;text-align:right;">0</div>
<div class="t" style="left:295.5px;top:1033.47px;font-size:12.5px;font-weight:700;color:#1b1b1b;">15.12.2021</div>
<div class="t" style="left:295.5px;top:1052.54px;font-size:12.3px;font-weight:700;color:#5e5e5e;">Středa</div>
<svg style="left:405.0px;top:1039.0px" width="10" height="10" viewBox="0 0 10 10"><path d="M0.8 0.8 L8.8 8.8 M8.8 0.8 L0.8 8.8" stroke="#6f6f6f" stroke-width="1.1"/></svg>
<svg style="left:418.5px;top:1038.0px" width="12" height="12" viewBox="0 0 12 12"><path d="M0.5 11.3 L1.4 8 L7 2.4 L9.3 4.7 L3.7 10.3 Z M7.8 1.6 L8.6 0.8 A1.5 1.5 0 0 1 10.9 3.1 L10.1 3.9 Z" fill="#7c7c7c"/></svg>
<svg style="left:434.0px;top:1038.0px" width="13" height="12" viewBox="0 0 13 12"><g fill="none" stroke="#d2d2d2" stroke-width="1"><path d="M8.5 4.5 V3 L6 0.5 H0.5 V10.5 H8.5 V8.5"/><path d="M2 4.5 H3.5 M4.5 4.5 H6 M2 6.5 H3.5 M5 8 L6.5 9.5 M7 8 L11.5 3.5"/></g></svg>
<div class="t" style="left:460.5px;top:1041.84px;font-size:12px;font-weight:400;color:#1f1f1f;">07:00 -&nbsp; 15:30</div>
<div class="t" style="left:546.5px;top:1041.84px;font-size:12px;font-weight:400;color:#1f1f1f;">Operační sál 1</div>
<div class="t" style="left:809px;top:1041.84px;font-size:12px;font-weight:400;color:#a8a8a8;">1P</div>
<div class="t" style="right:1017.5px;top:1033.27px;font-size:12.5px;font-weight:700;color:#111;text-align:right;">8</div>
<div class="t" style="right:504px;top:1033.27px;font-size:12.5px;font-weight:700;color:#111;text-align:right;">0</div>
<div class="r" style="left:291px;top:1065px;width:1586px;height:2px;background:#fff"></div>
<div class="r" style="left:394px;top:1065px;width:1px;height:2px;background:#dedede"></div>
<div class="r" style="left:850px;top:1065px;width:1px;height:2px;background:#dedede"></div>
<div class="r" style="left:907px;top:1065px;width:1px;height:2px;background:#dedede"></div>
<div class="r" style="left:1363px;top:1065px;width:1px;height:2px;background:#dedede"></div>
<div class="r" style="left:1420px;top:1065px;width:1px;height:2px;background:#dedede"></div>
<div class="r" style="left:1906px;top:187px;width:14px;height:893px;background:#f1f1f1"></div>
<div class="r" style="left:1909px;top:200px;width:9.5px;height:338px;background:#c1c1c1"></div>
<div class="r" style="left:1906px;top:187px;width:14px;height:7px;background:linear-gradient(rgba(20,20,60,.22),rgba(0,0,0,0))"></div>
<svg style="left:1910px;top:191px" width="8" height="5" viewBox="0 0 8 5"><path d="M0.5 4.5 L4 0.5 L7.5 4.5 Z" fill="#a3a3a3"/></svg>
<svg style="left:1910px;top:1058px" width="8" height="5" viewBox="0 0 8 5"><path d="M0.5 0.5 L4 4.5 L7.5 0.5 Z" fill="#505050"/></svg>
<div class="r" style="left:262px;top:1067px;width:1644px;height:13px;background:#f1f1f1"></div>
<div class="r" style="left:1906px;top:1067px;width:14px;height:13px;background:#dcdcdc"></div>
<svg style="left:267px;top:1070px" width="5" height="8" viewBox="0 0 5 8"><path d="M4.5 0.5 L0.5 4 L4.5 7.5 Z" fill="#a3a3a3"/></svg>
<svg style="left:1899px;top:1070px" width="5" height="8" viewBox="0 0 5 8"><path d="M0.5 0.5 L4.5 4 L0.5 7.5 Z" fill="#a3a3a3"/></svg>
<svg style="left:0;top:0" width="1920" height="1080" viewBox="0 0 1920 1080"><path d="M1826.3 437 H1849.5 V1022.8 H1861.5 L1838 1046 L1814.5 1022.8 H1826.3 Z" fill="#ffc000" stroke="#000" stroke-width="2.1" stroke-linejoin="miter"/><path d="M1712 710 L1826.5 618.5" stroke="#000" stroke-width="2"/><rect x="1395" y="711" width="318" height="134" fill="rgba(255,192,0,0.8)" stroke="#000" stroke-width="2"/></svg>
<div class="t" style="left:1254.5px;width:600px;text-align:center;top:735.30px;font-size:32.6px;font-weight:400;color:#000;letter-spacing:0px">Na konci stránky</div>
<div class="t" style="left:1254.5px;width:600px;text-align:center;top:778.30px;font-size:32.6px;font-weight:400;color:#000;letter-spacing:0.5px">nalezneme</div>
<div class="t" style="left:1254.5px;width:600px;text-align:center;top:820.50px;font-size:32.6px;font-weight:400;color:#000;letter-spacing:0.7px">statistiku</div>
</body></html>
